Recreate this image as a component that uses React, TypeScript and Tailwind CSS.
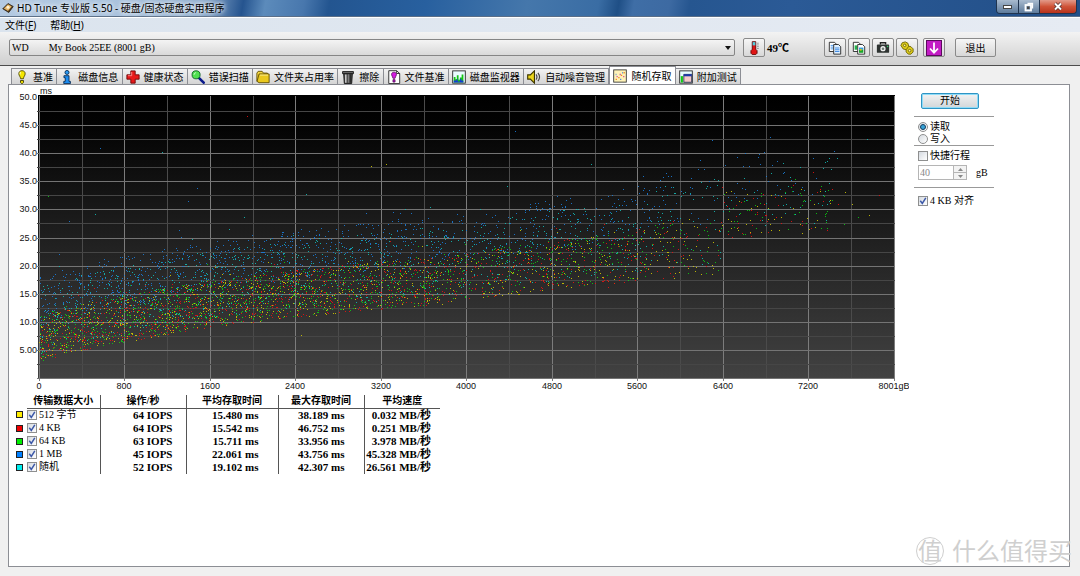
import { useMemo, useState } from 'react';
import type { ReactNode } from 'react';

const CJK_SANS = "font-['Noto_Sans','Noto_Sans_CJK_SC',sans-serif]";
const CJK_SERIF = "font-['Liberation_Serif','Noto_Sans_CJK_SC',serif]";

type SeriesId = 'b512' | 'k4' | 'k64' | 'm1' | 'rnd';

interface Series {
  id: SeriesId;
  label: string;
  color: string;
  swatch: string;
  iops: string;
  avg: string;
  max: string;
  speed: string;
  // spread of the cloud above the lower envelope, in ms
  offset: number;
  spread: number;
  outliers: [number, number][];
}

const SERIES: Series[] = [
  {
    id: 'b512', label: '512 字节', color: '#d6cf00', swatch: 'bg-[#ffee00]',
    iops: '64 IOPS', avg: '15.480 ms', max: '38.189 ms', speed: '0.032 MB/秒',
    offset: 0, spread: 8.3,
    outliers: [[3110, 37.8], [3250, 38.1], [2450, 7.6], [7540, 33.1], [7610, 30.9], [7770, 29]],
  },
  {
    id: 'k4', label: '4 KB', color: '#ee1010', swatch: 'bg-[#ee0000]',
    iops: '64 IOPS', avg: '15.542 ms', max: '46.752 ms', speed: '0.251 MB/秒',
    offset: 0, spread: 8.3,
    outliers: [[1950, 46.7], [7860, 32.5], [5320, 16.2]],
  },
  {
    id: 'k64', label: '64 KB', color: '#0ad412', swatch: 'bg-[#00ee00]',
    iops: '63 IOPS', avg: '15.711 ms', max: '33.956 ms', speed: '3.978 MB/秒',
    offset: 0.2, spread: 8.3,
    outliers: [[80, 32.4], [7530, 27.4], [7660, 28.7]],
  },
  {
    id: 'm1', label: '1 MB', color: '#1a80e0', swatch: 'bg-[#0080ff]',
    iops: '45 IOPS', avg: '22.061 ms', max: '43.756 ms', speed: '45.328 MB/秒',
    offset: 6.5, spread: 8.8,
    outliers: [[570, 41], [4450, 43.9], [6840, 42.8], [6300, 42.3], [1480, 33.8], [1390, 31.5], [280, 28]],
  },
  {
    id: 'rnd', label: '随机', color: '#10c2bc', swatch: 'bg-[#00eeee]',
    iops: '52 IOPS', avg: '19.102 ms', max: '42.307 ms', speed: '26.561 MB/秒',
    offset: 1.5, spread: 12,
    outliers: [[1150, 40.3], [2500, 32.7], [4380, 34.2], [520, 29.2], [1920, 28.6], [7750, 42.5], [5170, 38]],
  },
];

// Plot geometry, in viewBox units
const X0 = 30;
const X1 = 885;
const Y0 = 12;
const Y1 = 293;
const xOf = (gb: number) => X0 + (gb / 8001) * (X1 - X0);
const yOf = (ms: number) => Y0 + ((50 - ms) / 50) * (Y1 - Y0);

function makeRandom(seed: number) {
  let a = seed;
  return () => {
    a = (a + 0x6d2b79f5) | 0;
    let t = Math.imul(a ^ (a >>> 15), 1 | a);
    t = (t + Math.imul(t ^ (t >>> 7), 61 | t)) ^ t;
    return ((t ^ (t >>> 14)) >>> 0) / 4294967296;
  };
}

const ENVELOPE: [number, number][] = [
  [0, 2.7], [300, 4.6], [800, 6.3], [1600, 9], [2400, 10.8], [3200, 12.2],
  [4000, 13.5], [4800, 15.8], [5600, 17.2], [6380, 18], [6381, 24.8], [8001, 27],
];

// how many points land at each capacity, relative to the outer tracks
const DENSITY: [number, number][] = [
  [0, 1], [1600, 0.95], [2400, 0.85], [3200, 0.75], [4000, 0.6], [4800, 0.5],
  [5600, 0.4], [5800, 0.3], [6300, 0.2], [6400, 0.2], [7100, 0.18], [7400, 0.12], [7500, 0], [8001, 0],
];

// the cloud gets taller toward the inner tracks
const STRETCH: [number, number][] = [
  [0, 1], [5500, 1.05], [5900, 1.3], [6380, 1.3], [6381, 1], [8001, 1],
];

function lerp(table: [number, number][], at: number) {
  for (let i = 1; i < table.length; i++) {
    if (at <= table[i][0]) {
      const [a, va] = table[i - 1];
      const [b, vb] = table[i];
      return va + ((at - a) / (b - a)) * (vb - va);
    }
  }
  return table[table.length - 1][1];
}

function buildPath(series: Series, seed: number) {
  const rand = makeRandom(seed * 7919 + 17);
  let d = '';
  const put = (gb: number, ms: number) => {
    d += `M${Math.round(xOf(gb))} ${Math.round(yOf(ms))}h1v1h-1z`;
  };
  for (let i = 0; i < 1700; i++) {
    const gb = rand() * 7480;
    const keep = rand();
    const pos = rand();
    const tail = rand();
    if (keep > lerp(DENSITY, gb)) continue;
    let ms = lerp(ENVELOPE, gb) + (series.offset + pos * series.spread) * lerp(STRETCH, gb);
    if (tail > 0.94) ms += rand() * 4;
    put(gb, ms);
  }
  series.outliers.forEach(([gb, ms]) => put(gb, ms));
  return d;
}

/* ---------- icons ---------- */

function Icon({ size = 14, children }: { size?: number; children: ReactNode }) {
  return (
    <svg width={size} height={size} viewBox="0 0 16 16" className="shrink-0" aria-hidden="true">
      {children}
    </svg>
  );
}

const bulb = (
  <Icon>
    <path d="M8 .8c2.4 0 3.8 1.6 3.6 3.7C11.500 6.500 9.800 7.500 9.600 10H6.400C6.200 7.500 4.500 6.500 4.400 4.500 4.200 2.400 5.600.8 8 .8z" fill="#f4e600" stroke="#4a4600" />
    <path d="M6.300 2.500c-.6.6-.7 1.600-.3 2.500" stroke="#fff" fill="none" />
    <path d="M6.300 12h3.400v2.200L8.600 15.500H7.400l-1.100-1.300z" fill="#e8d900" stroke="#3a3700" />
  </Icon>
);

const info = (
  <Icon>
    <circle cx="8" cy="2.800" r="2.300" fill="#2b9bf4" stroke="#052a55" />
    <path d="M4.500 6.500h5.800v6.500h1.600v2.500H4.300V13H6V8.800H4.500z" fill="#1d8cf0" stroke="#052a55" />
  </Icon>
);

const cross = (
  <Icon>
    <path d="M5.500 1h5v4.500H15v5h-4.500V15h-5v-4.500H1v-5h4.500z" fill="#e81a1a" stroke="#6d0606" />
    <path d="M6.500 2.200v4.300H2.200" stroke="#ff9090" fill="none" />
  </Icon>
);

const magnifier = (
  <Icon>
    <path d="M9 9l5.500 5.500" stroke="#0b1a8c" strokeWidth="3" strokeLinecap="round" />
    <circle cx="5.800" cy="5.500" r="4.600" fill="#4fe04f" stroke="#0c5c22" />
    <path d="M3.500 5.500c0-1.500 1-2.300 2.300-2.400" stroke="#d8ffd8" fill="none" />
  </Icon>
);

const folder = (
  <Icon>
    <path d="M1 13V3.500L2.500 1.500H7L8.500 3.500H13V6" fill="#f5d743" stroke="#5b4a00" />
    <path d="M3.500 4.500H15v10H3.500L1.200 13z" fill="#eac81e" stroke="#5b4a00" />
    <path d="M4.500 5.800h9.300" stroke="#fff3a0" />
  </Icon>
);

const trash = (
  <Icon>
    <path d="M3 4h10l-.8 11.500H3.800z" fill="#4c4c4c" stroke="#111" />
    <path d="M1.800 1.800h12.400v2.400H1.800z" fill="#6e6e6e" stroke="#111" />
    <path d="M5.500 5v9.500" stroke="#dcdcdc" strokeWidth="1.500" />
    <path d="M8.500 5v9.500" stroke="#8a8a8a" />
    <path d="M11 5v9.500" stroke="#222" />
  </Icon>
);

const fileBench = (
  <Icon>
    <path d="M2 .8h9L14.500 4v11.500H2z" fill="#fff" stroke="#222" />
    <path d="M11 .8V4h3.500" fill="none" stroke="#222" />
    <path d="M8 2.500c2 0 3 1.300 2.800 2.900C10.600 7 9.400 7.600 9.200 9.500H6.800C6.600 7.600 5.400 7 5.200 5.400 5 3.800 6 2.500 8 2.500z" fill="#d31be0" stroke="#4d0753" strokeWidth=".8" />
    <path d="M6.800 11h2.400v2.800H6.800z" fill="#b014bc" stroke="#4d0753" strokeWidth=".8" />
  </Icon>
);

const monitor = (
  <Icon>
    <rect x=".8" y="1" width="14.400" height="14" fill="#e9fbff" stroke="#222" />
    <path d="M2 14.300V8h2v2.500h1.500V6h2v5H9V8.500h2V5h2v9.300z" fill="#14c614" />
    <path d="M2 14.300V12h3v-1.500h1.500V13H9v-3h1.500v2H13v2.300z" fill="#1539d8" />
  </Icon>
);

const speaker = (
  <Icon>
    <path d="M.8 5.500h3L8.500 1v14L3.800 10.500h-3z" fill="#ecd61c" stroke="#3e3700" strokeWidth="1.300" />
    <path d="M10.300 5c1.300 1.800 1.300 4.200 0 6M12.500 3.200c2.300 3 2.300 6.600 0 9.600" stroke="#444" fill="none" strokeWidth="1.300" />
  </Icon>
);

const scatter = (
  <Icon>
    <rect x=".8" y="1" width="14.400" height="14" fill="#fff3b8" stroke="#333" />
    <path d="M3 11h1.500v1.500H3zM6 9h1.500v1.500H6zM9 6.500h1.500V8H9zM12 3.500h1.500V5H12z" fill="#f08b1e" />
    <path d="M4 8h1.500v1.500H4zM7.500 5.500H9V7H7.500zM11.500 8H13v1.500h-1.500z" fill="#d9579b" />
    <path d="M3 5.500h1V7H3zM8 11h1.500v1.500H8zM10.500 3.500h1V5h-1z" fill="#4f8fd8" />
  </Icon>
);

const extra = (
  <Icon>
    <rect x=".8" y="1" width="14.400" height="14" fill="#e9fbff" stroke="#222" />
    <path d="M2 14.300V7h2.500v7.300z" fill="#14c614" />
    <path d="M5.500 5h9v9h-9z" fill="#f7c9c9" stroke="#26324f" />
    <path d="M5.500 4.800h9v2.400h-9z" fill="#1d39a8" />
  </Icon>
);

const TABS: { label: string; icon: ReactNode }[] = [
  { label: '基准', icon: bulb },
  { label: '磁盘信息', icon: info },
  { label: '健康状态', icon: cross },
  { label: '错误扫描', icon: magnifier },
  { label: '文件夹占用率', icon: folder },
  { label: '擦除', icon: trash },
  { label: '文件基准', icon: fileBench },
  { label: '磁盘监视器', icon: monitor },
  { label: '自动噪音管理', icon: speaker },
  { label: '随机存取', icon: scatter },
  { label: '附加测试', icon: extra },
];

const copyText = (
  <Icon>
    <path d="M1.500 1.500h6l2 2v8.500h-8z" fill="#fff" stroke="#222" />
    <path d="M3 5h4M3 7h4M3 9h4" stroke="#3d8fe8" />
    <path d="M6.500 4h5.500l2.500 2.500v8.500h-8z" fill="#dff0ff" stroke="#222" />
    <path d="M8 8h5M8 10h5M8 12h5" stroke="#2f7fe0" />
  </Icon>
);

const copyImage = (
  <Icon>
    <path d="M1.500 1.500h6l2 2v8.500h-8z" fill="#fff" stroke="#222" />
    <path d="M3 5h3v5H3z" fill="#27b04c" />
    <path d="M6.500 4h5.500l2.500 2.500v8.500h-8z" fill="#fff" stroke="#222" />
    <path d="M8 7.500h5V10H8z" fill="#2f9be0" />
    <path d="M8 10h5v3.500H8z" fill="#19a52e" />
    <path d="M9 9h2v2H9z" fill="#e6c31a" />
  </Icon>
);

const camera = (
  <Icon>
    <path d="M5 4V2h6v2" fill="none" stroke="#222" strokeWidth="1.500" />
    <rect x="1" y="4" width="14" height="9.500" rx="1" fill="#2e3331" />
    <circle cx="8" cy="8.800" r="3" fill="#f0f0f0" />
    <circle cx="8" cy="8.800" r="1.500" fill="#6c7a72" />
    <path d="M12.500 5.500h1.500V7h-1.500z" fill="#35d06a" />
  </Icon>
);

const gears = (
  <Icon>
    <path d="M1 5l1.500-3L6 1l3 1.500L10 6l2.500.5L15 9v3.500L12.500 15H9.500L7 12.500V10L3.500 9z" fill="#dccb1c" stroke="#6b6100" />
    <circle cx="5.300" cy="5" r="1.400" fill="#fff7a0" stroke="#6b6100" />
    <circle cx="11" cy="11" r="1.500" fill="#fff7a0" stroke="#6b6100" />
    <path d="M7 10l3-4" stroke="#6b6100" />
  </Icon>
);

const downArrow = (
  <Icon size={16}>
    <rect x=".5" y=".5" width="15" height="15" fill="#c21cc4" stroke="#5c0a5e" />
    <path d="M8 2.500v10M4 8.500l4 4.300 4-4.300" stroke="#fff" strokeWidth="1.800" fill="none" />
  </Icon>
);

const TOOLS = [
  { name: '复制文本', icon: copyText },
  { name: '复制图像', icon: copyImage },
  { name: '截图', icon: camera },
  { name: '选项', icon: gears },
];

function ToolButton({ label, children }: { label: string; children: ReactNode }) {
  return (
    <button
      aria-label={label}
      className="flex h-[19px] w-[22px] items-center justify-center rounded-xs border border-[#8a8a8a] bg-linear-to-b from-[#f6f6f6] to-[#d8d8d8]"
    >
      {children}
    </button>
  );
}

/* ---------- form controls ---------- */

interface CheckProps {
  label: string;
  checked: boolean;
  onChange: (v: boolean) => void;
}

function Check({ label, checked, onChange }: CheckProps) {
  return (
    <label className="flex h-[13px] items-center gap-[2px] whitespace-nowrap">
      <span className="relative size-[10px] shrink-0">
        <input
          type="checkbox"
          checked={checked}
          onChange={(e) => onChange(e.target.checked)}
          className="block size-[10px] appearance-none border border-[#8e8f8f] bg-linear-to-br from-[#d5dae0] to-white"
        />
        {checked && (
          <svg viewBox="0 0 10 10" className="pointer-events-none absolute inset-0 size-[10px]">
            <path d="M2.300 4.800l2 2.600 3.500-5.500" stroke="#3c58a8" strokeWidth="1.500" fill="none" />
          </svg>
        )}
      </span>
      {label}
    </label>
  );
}

interface RadioProps {
  label: string;
  checked: boolean;
  onSelect: () => void;
}

function Radio({ label, checked, onSelect }: RadioProps) {
  return (
    <label className="flex h-3 items-center gap-[2px]">
      <span className="relative size-[10px] shrink-0">
        <input
          type="radio"
          name="mode"
          checked={checked}
          onChange={onSelect}
          className="block size-[10px] appearance-none rounded-full border border-[#8e8f8f] bg-linear-to-br from-[#d5dae0] to-white"
        />
        {checked && (
          <span className="pointer-events-none absolute inset-[2px] rounded-full border border-[#123a5c] bg-[#35a3d8]" />
        )}
      </span>
      {label}
    </label>
  );
}

/* ---------- chart ---------- */

function Chart({ visible }: { visible: Record<SeriesId, boolean> }) {
  const paths = useMemo(() => SERIES.map((s, i) => ({ ...s, d: buildPath(s, i + 1) })), []);
  const rows = Array.from({ length: 21 }, (_, i) => 50 - i * 2.5);
  const cols = Array.from({ length: 21 }, (_, i) => i * 400);

  return (
    <svg viewBox="0 0 900 308" className="block w-full font-['Liberation_Sans',sans-serif] text-[9px]" fill="#111">
      <defs>
        <linearGradient id="plot" x1="0" y1="0" x2="0" y2="1">
          <stop offset="0" stopColor="#000" />
          <stop offset=".1" stopColor="#030303" />
          <stop offset="1" stopColor="#424242" />
        </linearGradient>
      </defs>
      <text x="31" y="9">ms</text>
      <rect x="29" y="10" width="857" height="284" fill="url(#plot)" />
      <g shapeRendering="crispEdges">
        {cols.map((gb) => (
          <rect
            key={gb}
            x={Math.round(xOf(Math.min(gb, 8001)))}
            y="11"
            width="1"
            height={gb % 800 === 0 ? 285 : 283}
            fill={gb % 800 === 0 ? '#7c7c7c' : '#4b4b4b'}
          />
        ))}
        {rows.map((ms) => (
          ms < 50 && (
            <rect
              key={ms}
              x="28"
              y={Math.round(yOf(ms))}
              width="858"
              height="1"
              fill={ms % 5 === 0 ? '#747474' : '#464646'}
            />
          )
        ))}
        {paths.map((s) => visible[s.id] && <path key={s.id} d={s.d} fill={s.color} opacity=".85" />)}
      </g>
      {[50, 45, 40, 35, 30, 25, 20, 15, 10, 5].map((ms) => (
        <text key={ms} x="28" y={Math.round(yOf(ms)) + 3} textAnchor="end">
          {ms === 5 ? '5.00' : ms.toFixed(1)}
        </text>
      ))}
      {[0, 800, 1600, 2400, 3200, 4000, 4800, 5600, 6400, 7200].map((gb) => (
        <text key={gb} x={Math.round(xOf(gb))} y="304" textAnchor="middle">{gb}</text>
      ))}
      <text x={X1} y="304" textAnchor="middle">8001gB</text>
    </svg>
  );
}

export default function App() {
  const [tab, setTab] = useState('随机存取');
  const [mode, setMode] = useState<'read' | 'write'>('read');
  const [shortStroke, setShortStroke] = useState(false);
  const [align, setAlign] = useState(true);
  const [visible, setVisible] = useState<Record<SeriesId, boolean>>({
    b512: true, k4: true, k64: true, m1: true, rnd: true,
  });

  return (
    <div className={`relative flex min-h-screen flex-col bg-[#f0f0f0] text-[10px] leading-3 text-black ${CJK_SANS}`}>
      {/* Title bar */}
      <header className="flex h-[17px] items-center border-b border-[#5b6f88] bg-[linear-gradient(100deg,#b4cae2_0,#a9c2dd_120px,#8fadcd_200px,#25548f_240px,#5c8bbb_262px,#4877ad_300px,#235590_325px,#28609f_420px,#4577ab_520px,#3a6da4_590px,#1f4f86_610px,#3f6ea6_625px,#3d6aa2_660px,#265690_680px,#2b5a96_780px,#224f88_100%)] pl-[2px]">
        <svg width="12" height="12" viewBox="0 0 16 16" className="shrink-0" aria-hidden="true">
          <path d="M1 9l7-7 7 4-6 8z" fill="#4d3a20" stroke="#2b1e0c" />
          <path d="M2.500 8.500l5.500-5.500 5 3-5 6z" fill="#e8b765" />
          <circle cx="8" cy="7" r="2" fill="#fff3d6" />
        </svg>
        <h1 className="ml-[3px] flex-1 whitespace-nowrap [text-shadow:0_0_4px_#fff,0_0_6px_#fff]">
          HD Tune 专业版 5.50 - 硬盘/固态硬盘实用程序
        </h1>
        <div className="mr-[3px] flex h-[14px] self-start overflow-hidden rounded-b-sm border border-t-0 border-[#20344f]">
          <button aria-label="最小化" className="flex w-[22px] items-center justify-center border-r border-[#20344f] bg-linear-to-b from-[#a9bbcf] to-[#5f7c9c]">
            <svg width="9" height="4" viewBox="0 0 9 4"><rect x=".5" y=".5" width="8" height="3" fill="#fff" stroke="#444" /></svg>
          </button>
          <button aria-label="还原" className="flex w-[21px] items-center justify-center border-r border-[#20344f] bg-linear-to-b from-[#a9bbcf] to-[#5f7c9c]">
            <svg width="10" height="10" viewBox="0 0 10 10" fill="none">
              <path d="M3.500 1.500h5v5" stroke="#fff" strokeWidth="1.300" />
              <rect x="1.500" y="3" width="5.500" height="5.500" stroke="#fff" strokeWidth="1.800" />
              <rect x="3" y="4.500" width="2.500" height="2.500" fill="#444" />
            </svg>
          </button>
          <button aria-label="关闭" className="flex w-9 items-center justify-center bg-linear-to-b from-[#e29a8a] via-[#cf5338] to-[#b8321a]">
            <svg width="10" height="9" viewBox="0 0 10 9">
              <path d="M2 1.500l6 6M8 1.500l-6 6" stroke="#4c2a2a" strokeWidth="3.400" />
              <path d="M2 1.500l6 6M8 1.500l-6 6" stroke="#fff" strokeWidth="2" />
            </svg>
          </button>
        </div>
      </header>

      {/* Menu */}
      <nav className="flex h-[15px] items-center gap-[14px] border-t border-white bg-linear-to-r from-[#dbe4ee] to-[#e6ebf3] pl-[5px]">
        <button>文件(<u>F</u>)</button>
        <button>帮助(<u>H</u>)</button>
      </nav>

      {/* Toolbar */}
      <div className="flex h-[34px] items-center border-b border-[#4c4c4c] bg-linear-to-b from-[#f3f3f3] to-[#cfcfcf] pr-[84px] pb-[2px] pl-[9px]">
        <div className="relative min-w-0 flex-1">
          <select
            aria-label="驱动器"
            className={`block h-[17px] w-full appearance-none rounded-xs border border-[#858585] bg-linear-to-b from-[#f4f4f4] to-[#d9d9d9] pl-[2px] ${CJK_SERIF}`}
          >
            <option>{'WD\u00a0\u00a0\u00a0\u00a0\u00a0\u00a0\u00a0\u00a0My Book 25EE (8001 gB)'}</option>
          </select>
          <svg width="6" height="4" viewBox="0 0 6 4" className="pointer-events-none absolute top-[7px] right-1">
            <path d="M0 0h6L3 4z" fill="#111" />
          </svg>
        </div>
        <div className="ml-2 flex w-[81px] items-center gap-[2px]">
          <ToolButton label="温度">
            <Icon>
              <path d="M6 .8h4v8.700l1.500 1.500v3L10 15.500H6L4.500 14v-3L6 9.500z" fill="#e01414" stroke="#5a0505" />
              <path d="M6.500 1.300h3v3.700h-3z" fill="#4fd0e0" />
              <path d="M12.500 2v8" stroke="#333" strokeDasharray="1 1" />
            </Icon>
          </ToolButton>
          <span className={`text-[11px] font-bold ${CJK_SERIF}`}>49℃</span>
        </div>
        <div className="flex items-center gap-[2px]">
          {TOOLS.map((t) => (
            <ToolButton key={t.name} label={t.name}>{t.icon}</ToolButton>
          ))}
        </div>
        <div className="ml-[5px] flex items-center gap-[10px]">
          <ToolButton label="保存">{downArrow}</ToolButton>
          <button className="h-[19px] w-[41px] rounded-xs border border-[#8a8a8a] bg-linear-to-b from-[#f6f6f6] to-[#d8d8d8]">
            退出
          </button>
        </div>
      </div>

      {/* Tabs */}
      <div role="tablist" className="ml-[11px] flex h-[18px] w-[730px] items-end">
        {TABS.map(({ label, icon }) => (
          <button
            key={label}
            role="tab"
            aria-selected={tab === label}
            onClick={() => setTab(label)}
            className={
              tab === label
                ? 'flex h-[18px] flex-auto items-center gap-1 border-x border-t border-[#8c8e94] bg-white pr-[2px] pl-[3px] whitespace-nowrap'
                : 'flex h-4 flex-auto items-center gap-1 border-t border-r border-[#8c8e94] bg-linear-to-b from-[#f2f2f2] to-[#d4d4d4] pr-[2px] pl-[3px] whitespace-nowrap first:border-l'
            }
          >
            {icon}
            {label}
          </button>
        ))}
      </div>

      {/* Panel */}
      <main className="mr-[10px] mb-[9px] ml-2 flex flex-1 border border-[#8c8e94] bg-white">
        <section className="min-w-0 flex-1">
          <Chart visible={visible} />

          <table className={`mt-[2px] ml-[7px] w-[424px] table-fixed border-collapse ${CJK_SERIF}`}>
            <colgroup>
              <col className="w-[11px]" />
              <col className="w-[73px]" />
              <col className="w-[86px]" />
              <col className="w-[92px]" />
              <col className="w-[86px]" />
              <col className="w-[76px]" />
            </colgroup>
            <thead>
              <tr className="h-[13px] [&>th]:border-[#555] [&>th]:p-0 [&>th+th]:border-b">
                <th aria-label="颜色" />
                <th className="border-r">传输数据大小</th>
                <th className="border-r">操作/秒</th>
                <th className="border-r">平均存取时间</th>
                <th className="border-r">最大存取时间</th>
                <th>平均速度</th>
              </tr>
            </thead>
            <tbody>
              {SERIES.map((s) => (
                <tr key={s.id} className="h-[13px] [&>td]:border-[#555] [&>td]:p-0">
                  <td><span className={`block size-[7px] border border-[#222] ${s.swatch}`} /></td>
                  <td className="border-r">
                    <Check
                      label={s.label}
                      checked={visible[s.id]}
                      onChange={(v) => setVisible({ ...visible, [s.id]: v })}
                    />
                  </td>
                  <td className="border-r pr-[13px]! text-right text-[11px] font-bold">{s.iops}</td>
                  <td className="border-r pr-[19px]! text-right text-[11px] font-bold">{s.avg}</td>
                  <td className="border-r pr-[19px]! text-right text-[11px] font-bold">{s.max}</td>
                  <td className="pr-[9px]! text-right text-[11px] font-bold whitespace-nowrap">{s.speed}</td>
                </tr>
              ))}
            </tbody>
          </table>
        </section>

        {/* Options */}
        <aside className={`w-[160px] pt-2 pl-[5px] ${CJK_SERIF}`}>
          <button className="ml-[7px] h-4 w-[58px] rounded-xs border border-[#2f94c4] bg-linear-to-b from-[#f2f2f2] to-[#d2d6d9] shadow-[inset_0_0_0_1px_#8fdcf8]">
            开始
          </button>
          <fieldset className="mt-[7px] w-20 border-y border-[#999] pt-1 pl-1">
            <Radio label="读取" checked={mode === 'read'} onSelect={() => setMode('read')} />
            <Radio label="写入" checked={mode === 'write'} onSelect={() => setMode('write')} />
          </fieldset>
          <div className="w-20 border-b border-[#999] pt-[3px] pb-[7px] pl-1">
            <Check label="快捷行程" checked={shortStroke} onChange={setShortStroke} />
            <div className="mt-[3px] flex items-center gap-[9px]">
              <div className="flex h-[15px] w-[49px] border border-[#b5b5b5]">
                <input
                  id="stroke"
                  defaultValue="40"
                  disabled={!shortStroke}
                  className="w-[34px] bg-white pl-px text-[#888]"
                />
                <div className="flex flex-1 flex-col">
                  <button aria-label="增加" disabled={!shortStroke} className="flex flex-1 items-center justify-center border-b border-l border-[#b5b5b5] bg-[#f3f3f3]">
                    <svg width="5" height="3" viewBox="0 0 5 3"><path d="M0 3h5L2.500 0z" fill="#888" /></svg>
                  </button>
                  <button aria-label="减少" disabled={!shortStroke} className="flex flex-1 items-center justify-center border-l border-[#b5b5b5] bg-[#f3f3f3]">
                    <svg width="5" height="3" viewBox="0 0 5 3"><path d="M0 0h5L2.500 3z" fill="#888" /></svg>
                  </button>
                </div>
              </div>
              <label htmlFor="stroke">gB</label>
            </div>
          </div>
          <div className="pt-[6px] pl-1">
            <Check label="4 KB 对齐" checked={align} onChange={setAlign} />
          </div>
        </aside>
      </main>

      {/* Watermark */}
      <div className="pointer-events-none absolute right-[8px] bottom-[11px] flex items-center gap-2 text-[24px] leading-7 text-[#cfcfcf]">
        <span className="flex size-7 items-center justify-center rounded-full border border-[#cfcfcf]">值</span>
        <span className="whitespace-nowrap">什么值得买</span>
      </div>
    </div>
  );
}
